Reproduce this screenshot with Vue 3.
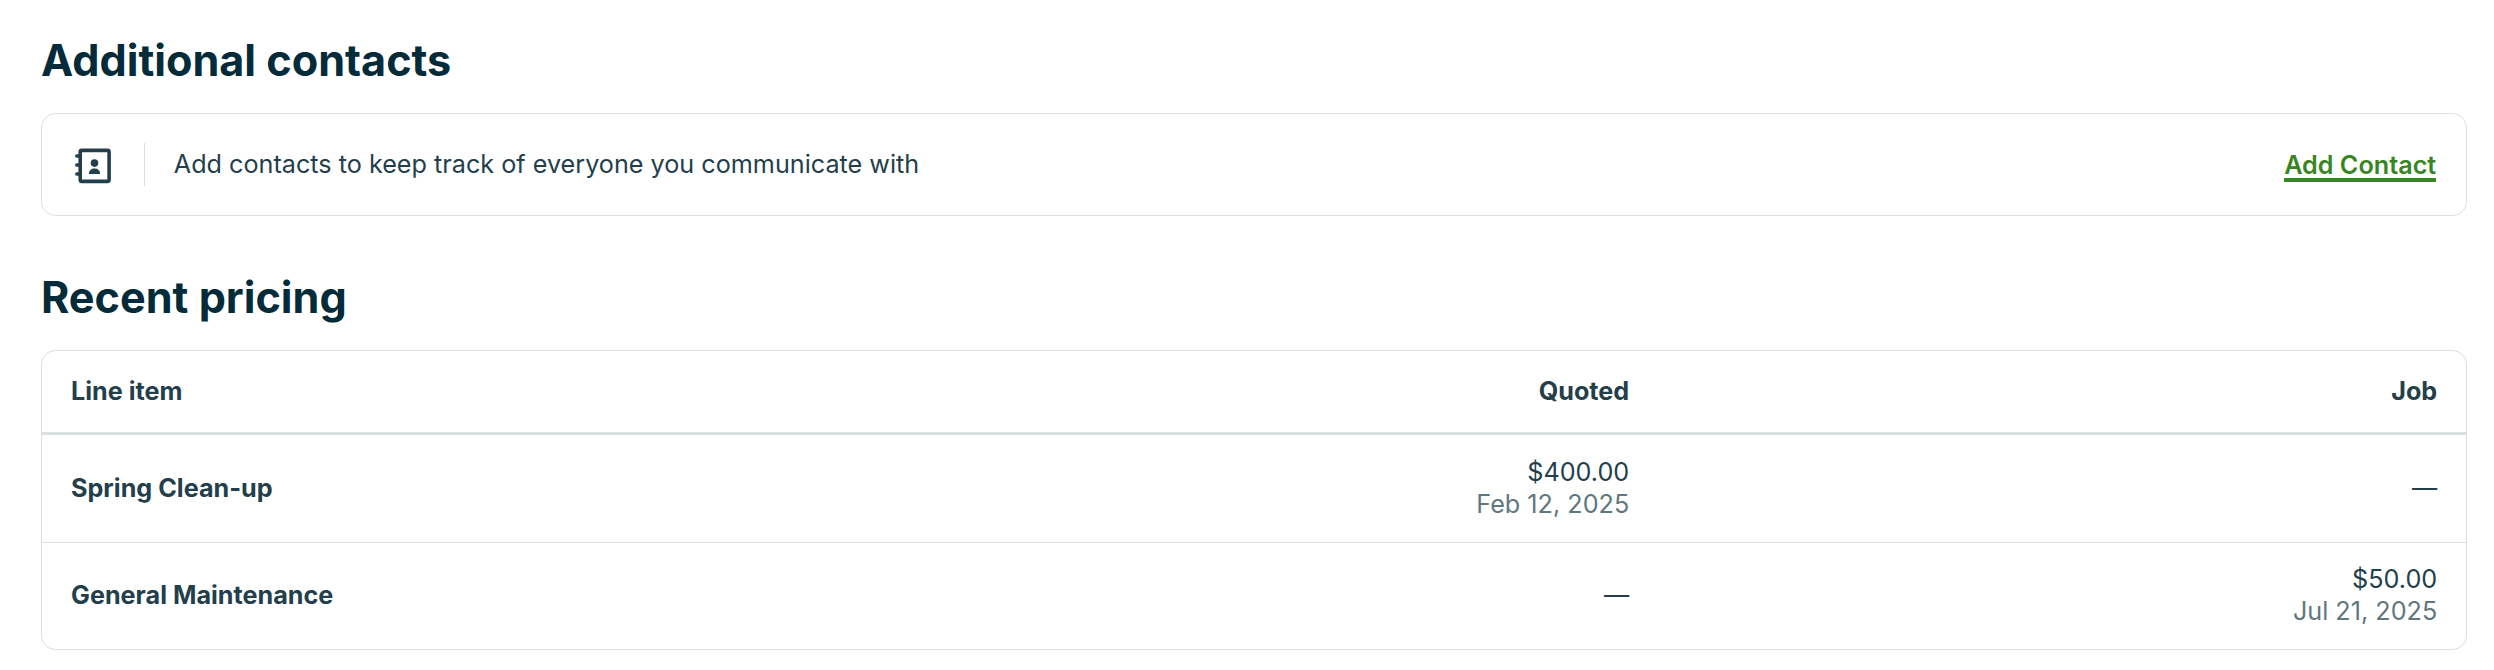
<script setup>
const columns = ['Line item', 'Quoted', 'Job']

const rows = [
  { name: 'Spring Clean-up', quoted: { price: '$400.00', date: 'Feb 12, 2025' }, job: null },
  { name: 'General Maintenance', quoted: null, job: { price: '$50.00', date: 'Jul 21, 2025' } },
]
</script>

<template>
  <main class="page">
    <section class="section">
      <h2 class="title">Additional contacts</h2>
      <div class="card contacts">
        <svg class="icon" viewBox="0 0 44 44" aria-hidden="true">
          <rect x="8.2" y="7.4" width="28.9" height="31" rx="1.6" fill="none" stroke="currentColor" stroke-width="3.6" />
          <path d="M4.8 13.1H8M4.8 22.1H8M4.8 31.1H8" fill="none" stroke="currentColor" stroke-width="3.5" stroke-linecap="round" />
          <circle cx="22.5" cy="20.1" r="3.8" fill="currentColor" />
          <path d="M16.9 31c0-3.4 2.4-5.4 5.6-5.4s5.6 2 5.6 5.4z" fill="currentColor" />
        </svg>
        <span class="divider"></span>
        <p class="message">Add contacts to keep track of everyone you communicate with</p>
        <a class="link">Add Contact</a>
      </div>
    </section>

    <section class="section">
      <h2 class="title">Recent pricing</h2>
      <div class="card table">
        <div class="row head">
          <div v-for="c in columns" :key="c" class="cell">{{ c }}</div>
        </div>
        <div v-for="row in rows" :key="row.name" class="row">
          <div class="cell name">{{ row.name }}</div>
          <div v-for="(entry, i) in [row.quoted, row.job]" :key="i" class="cell">
            <template v-if="entry">
              <span>{{ entry.price }}</span>
              <span class="date">{{ entry.date }}</span>
            </template>
            <span v-else>—</span>
          </div>
        </div>
      </div>
    </section>
  </main>
</template>

<style>
body {
  background: #fff;
}
</style>

<style scoped>
.page {
  box-sizing: border-box;
  padding: 36px 27px 20px 41px;
  display: flex;
  flex-direction: column;
  gap: 57px;
  font-family: Inter, sans-serif;
  font-size: 25.2px;
  line-height: 32px;
  color: #243f4c;
}
.title {
  margin: 0 0 29px;
  font-size: 43.2px;
  line-height: 48px;
  font-weight: 700;
  color: #032b3a;
}
.card {
  box-sizing: border-box;
  border: 1px solid #dadfe1;
  border-radius: 14.4px;
  overflow: hidden;
}
.contacts {
  height: 103px;
  display: flex;
  align-items: center;
  padding: 0 29.8px 0 30px;
}
.icon {
  width: 44px;
  height: 44px;
  flex: none;
}
.divider {
  width: 1px;
  height: 43px;
  margin: 0 28.8px 0 28px;
  background: #dadfe1;
}
.message {
  flex: 1;
  margin: 0;
  padding-bottom: 2px;
}
.link {
  font-weight: 600;
  line-height: 25px;
  padding-top: 7px;
  margin-bottom: 1px;
  color: #388523;
  border-bottom: 4px solid currentColor;
}
.row {
  box-sizing: border-box;
  height: 107px;
  display: grid;
  grid-template-columns: repeat(3, 1fr);
  align-items: center;
}
.row + .row {
  border-top: 1px solid #dadfe1;
}
.row.head {
  height: 84px;
  border-bottom: 3px solid #dadfe1;
  font-weight: 700;
}
.row.head + .row {
  border-top: 0;
}
.cell {
  display: flex;
  flex-direction: column;
  padding: 0 28.8px 2px;
  text-align: right;
}
.cell:first-child {
  padding-left: 29px;
  text-align: left;
}
.name {
  font-weight: 700;
}
.date {
  color: #617780;
}
</style>
